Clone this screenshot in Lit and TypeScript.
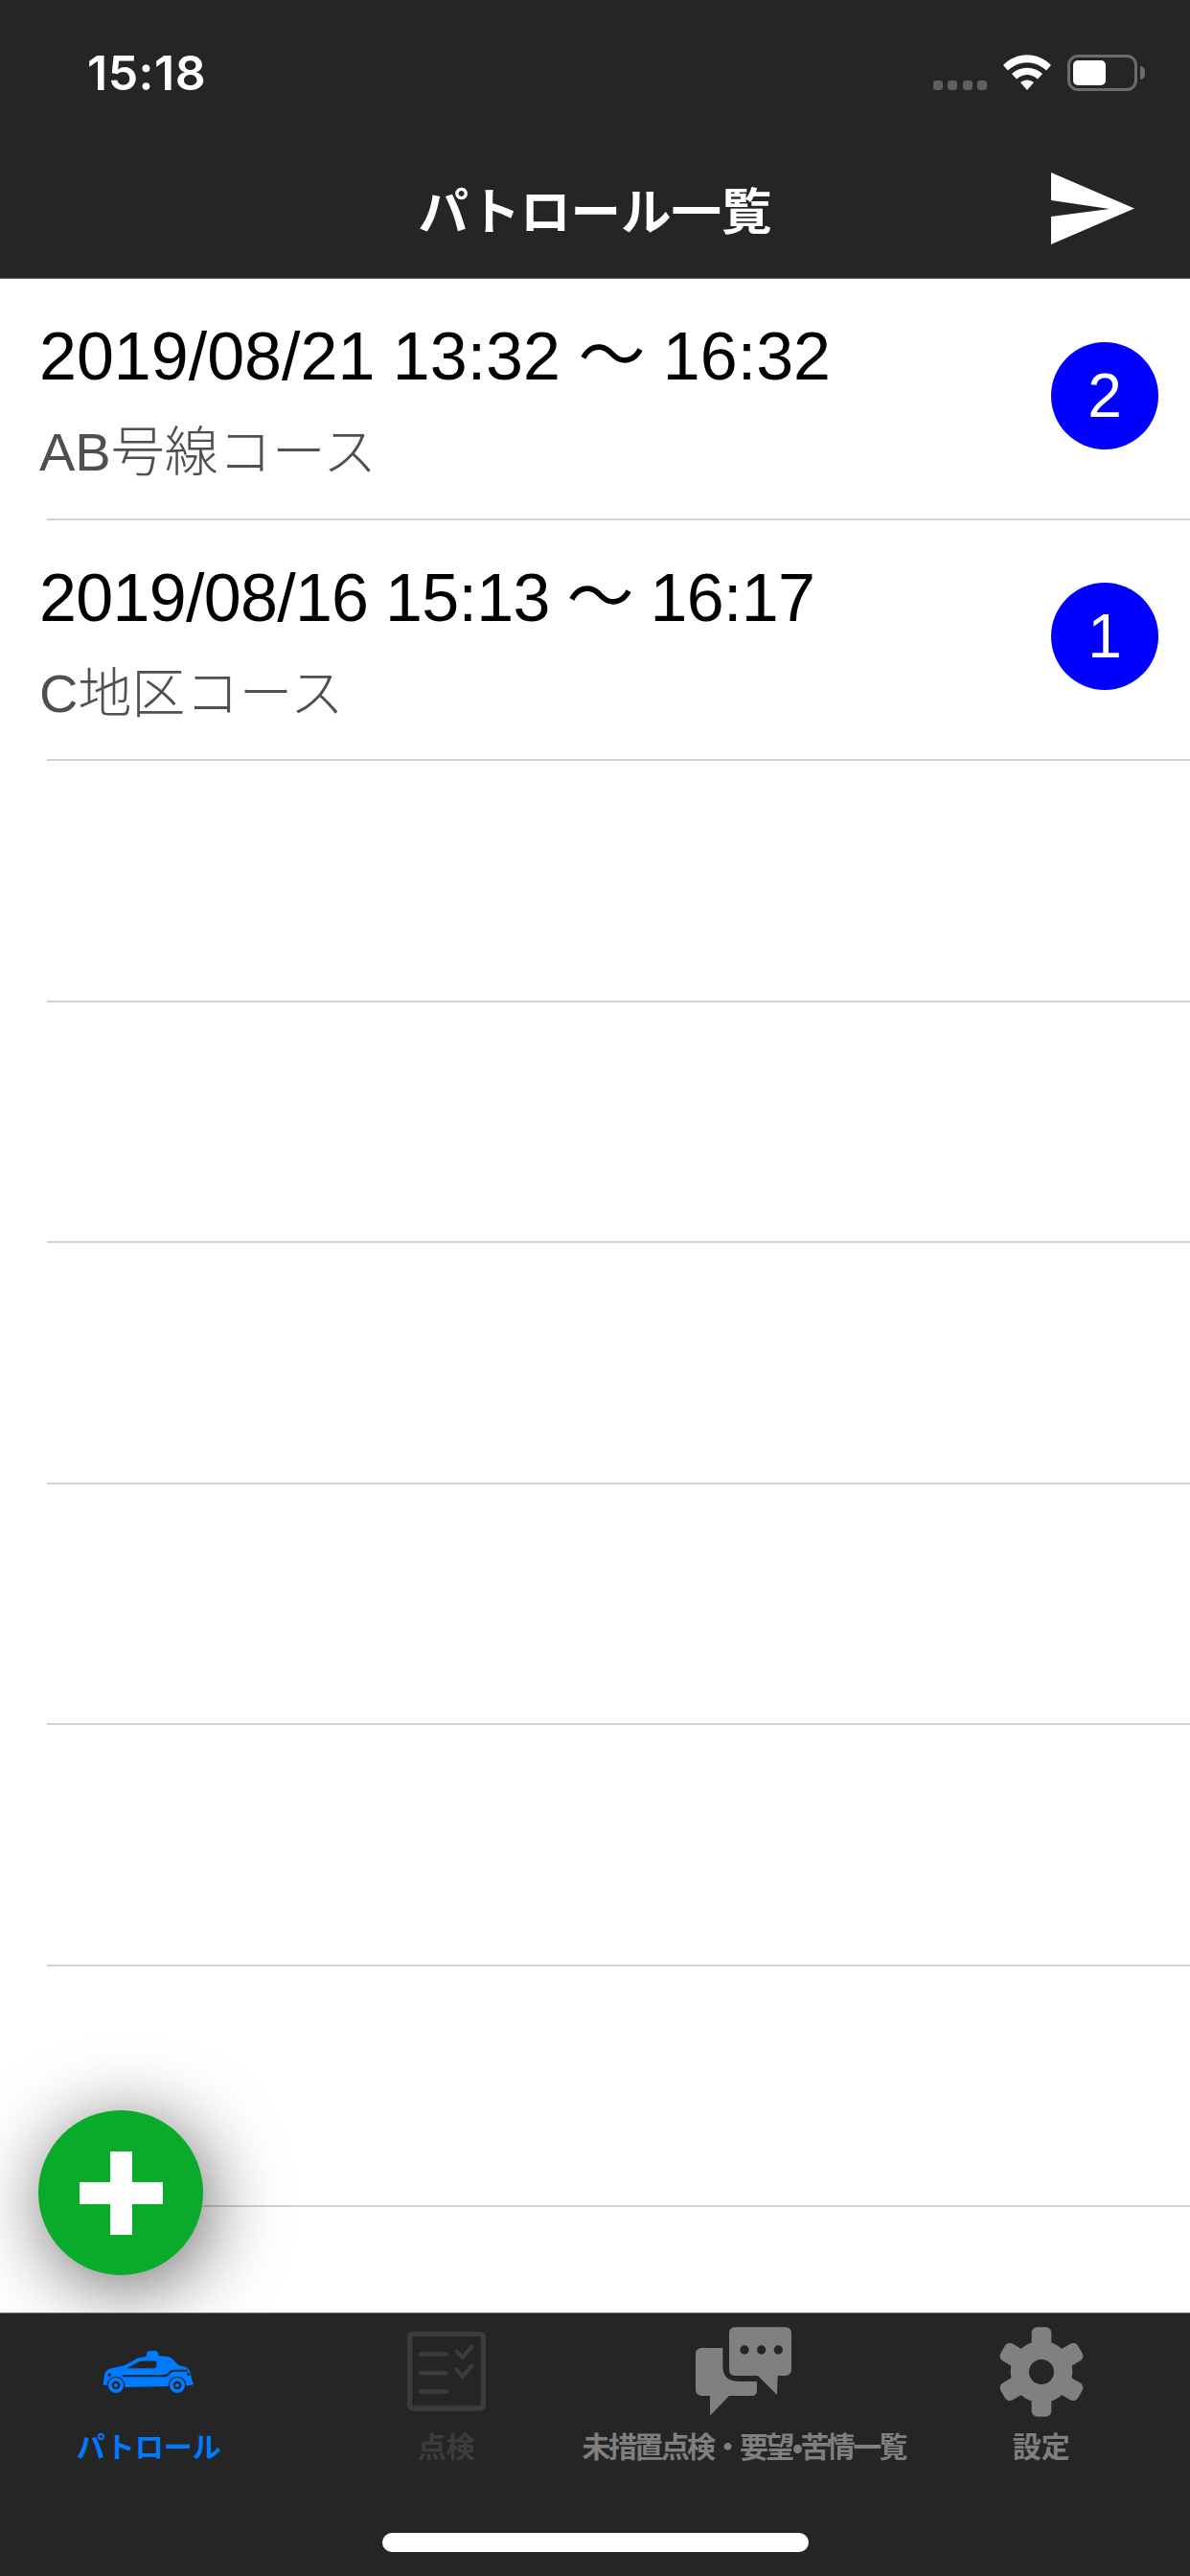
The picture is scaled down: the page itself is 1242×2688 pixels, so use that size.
import { LitElement, css, html, svg } from 'lit';
import { customElement } from 'lit/decorators.js';

interface Patrol {
  period: string;
  course: string;
  count: number;
  narrow?: boolean;
}

const patrols: Patrol[] = [
  { period: '2019/08/21 13:32 ～ 16:32', course: 'AB号線コース', count: 2 },
  // the 1s in this one run narrower in the original font
  { period: '2019/08/16 15:13 ～ 16:17', course: 'C地区コース', count: 1, narrow: true }
];

const ROW_COUNT = 8;

const carIcon = svg`<svg class="icon" width="120" height="70" viewBox="0 0 360 210">
  <path fill="#007aff" d="M38 148 L42 116 Q46 100 65 96 L105 88 L140 68 Q150 62 172 60 L175 48 Q177 42 188 42 L200 42 Q208 42 210 48 L212 58 L240 60 Q250 62 262 75 L275 88 L295 92 Q310 98 312 115 L316 135 Q323 142 320 148 Q306 152 290 152 L100 156 L56 152 Z"/>
  <path fill="#252525" d="M112 97 L148 77 Q156 73 205 74 L205 88 Q204 97 195 97 Z"/>
  <path fill="none" stroke="#252525" stroke-width="6" d="M98 121 L225 121 Q238 121 245 112 Q250 104 262 104 L302 104"/>
  <circle cx="58" cy="117" r="5" fill="#252525"/>
  <circle cx="305" cy="115" r="5" fill="#252525"/>
  <circle cx="78" cy="150" r="28" fill="#252525"/>
  <circle cx="270" cy="150" r="28" fill="#252525"/>
  <circle cx="78" cy="150" r="24" fill="#007aff"/>
  <circle cx="270" cy="150" r="24" fill="#007aff"/>
  <circle cx="78" cy="150" r="13" fill="#252525"/>
  <circle cx="270" cy="150" r="13" fill="#252525"/>
  <circle cx="78" cy="150" r="6" fill="#007aff"/>
  <circle cx="270" cy="150" r="6" fill="#007aff"/>
</svg>`;

const checklistIcon = svg`<svg class="icon" width="102" height="102" viewBox="0 0 306 306">
  <rect x="38" y="38" width="230" height="232" rx="8" fill="none" stroke="#3c3c3c" stroke-width="16"/>
  <g fill="none" stroke="#3c3c3c" stroke-width="13" stroke-linecap="round" stroke-linejoin="round">
    <path d="M72 100 H152 M72 160 H152 M72 218 H152"/>
    <path d="M185 92 L203 110 L232 78 M185 150 L203 170 L232 138"/>
  </g>
</svg>`;

const chatIcon = svg`<svg class="icon" width="120" height="110" viewBox="0 0 360 330">
  <g fill="#808080">
    <path d="M155 28 H310 Q330 28 330 48 V160 Q330 180 310 180 H287 L285 240 L225 180 H155 Q135 180 135 160 V48 Q135 28 155 28 Z"/>
    <path d="M50 93 H115 V150 Q115 198 165 198 H222 V225 Q222 243 205 243 H135 L75 305 V243 H50 Q30 243 30 223 V113 Q30 93 50 93 Z"/>
  </g>
  <g fill="#252525">
    <circle cx="183" cy="99" r="14"/>
    <circle cx="236" cy="99" r="14"/>
    <circle cx="289" cy="99" r="14"/>
  </g>
</svg>`;

const gearIcon = svg`<svg class="icon" width="110" height="110" viewBox="0 0 330 330">
  <g fill="#808080">
    <circle cx="165" cy="168" r="97"/>
    ${[0, 60, 120, 180, 240, 300].map(
      (deg) => svg`<rect x="134" y="28" width="62" height="100" rx="18" transform="rotate(${deg} 165 168)"/>`
    )}
  </g>
  <circle cx="165" cy="168" r="39" fill="#252525"/>
</svg>`;

const sendIcon = svg`<svg width="87" height="75" viewBox="0 0 87 75">
  <path fill="#fff" d="M0 0 L87 37.5 L0 75 L0 46 L61 38 L0 29 Z"/>
</svg>`;

const wifiIcon = svg`<svg width="50" height="37" viewBox="0 0 50 37">
  <path fill="#fff" d="M0 11 C14 -3.5 36 -3.5 50 11 L45 16.5 C33 5.5 17 5.5 5 16.5 Z"/>
  <path fill="#fff" d="M9 20 C18 11.5 32 11.5 41 20 L36 25.5 C29 19.5 21 19.5 14 25.5 Z"/>
  <path fill="#fff" d="M18 29 C22 25.5 28 25.5 32 29 L25 37 Z"/>
</svg>`;

@customElement('app-root')
export class AppRoot extends LitElement {
  static styles = css`
    :host {
      display: block;
      font-family: 'Liberation Sans', 'Noto Sans CJK JP', sans-serif;
    }

    .app {
      position: relative;
      display: flex;
      flex-direction: column;
      height: 2688px;
      overflow: hidden;
      background: #fff;
    }

    .header {
      height: 290px;
      flex: none;
      background: #252525;
      border-bottom: 1px solid #666;
      color: #fff;
    }

    .status {
      display: flex;
      align-items: flex-start;
      height: 180px;
      padding: 57px 47px 0 91px;
      box-sizing: border-box;
    }

    .time {
      flex: 1;
      font-family: 'Inter', 'Liberation Sans', sans-serif;
      font-size: 50px;
      font-weight: 600;
      line-height: 38px;
      letter-spacing: 0.5px;
    }

    .dots {
      display: flex;
      gap: 5.5px;
      margin: 27px 17px 0 0;
    }

    .dots span {
      width: 10px;
      height: 10px;
      border-radius: 3px;
      background: #5f5f5f;
    }

    .battery {
      display: flex;
      align-items: center;
      margin-left: 17px;
    }

    .battery-body {
      width: 73px;
      height: 38px;
      box-sizing: border-box;
      border: 3px solid #6c6c6c;
      border-radius: 11px;
      padding: 3px;
    }

    .battery-fill {
      width: 34px;
      height: 100%;
      border-radius: 5px;
      background: #fff;
    }

    .battery-cap {
      width: 5px;
      height: 14px;
      margin-left: 3px;
      border-radius: 0 6px 6px 0;
      background: #6c6c6c;
    }

    .nav {
      display: grid;
      grid-template-columns: minmax(0, 1fr) auto minmax(0, 1fr);
      align-items: center;
      height: 75px;
    }

    .title {
      grid-column: 2;
      font-family: 'Noto Sans CJK JP', sans-serif;
      font-size: 52.5px;
      font-weight: 700;
      line-height: 75px;
    }

    .send {
      justify-self: end;
      display: flex;
      margin-right: 58px;
    }

    .list {
      flex: 1;
      min-height: 0;
    }

    .row {
      display: flex;
      align-items: center;
      height: 249.5px;
      box-sizing: border-box;
      padding: 0 33px 0 41px;
    }

    .sep {
      height: 2px;
      margin-left: 49px;
      background: #d2d2d2;
    }

    .text {
      flex: 1;
      min-width: 0;
      padding-top: 7px;
    }

    .period {
      font-size: 70px;
      line-height: 76px;
      word-spacing: -1px;
      color: #000;
    }

    .period.narrow {
      letter-spacing: -0.7px;
    }

    .course {
      margin-top: 30px;
      font-family: 'Liberation Sans', 'Noto Sans CJK JP', sans-serif;
      font-size: 56px;
      font-weight: 300;
      line-height: 64px;
      color: #4f4f4f;
    }

    .badge {
      flex: none;
      display: flex;
      align-items: center;
      justify-content: center;
      width: 112px;
      height: 112px;
      margin-bottom: 6px;
      border-radius: 50%;
      background: #0000ff;
      color: #fff;
      font-size: 64px;
    }

    .fab {
      position: absolute;
      left: 40px;
      top: 2202px;
      display: flex;
      align-items: center;
      justify-content: center;
      width: 172px;
      height: 172px;
      border-radius: 50%;
      background: #0aaa2a;
      box-shadow: 6px 12px 80px rgba(0, 0, 0, 0.6);
    }

    .plus-h,
    .plus-v {
      position: absolute;
      background: #fff;
    }

    .plus-h {
      width: 87px;
      height: 23px;
    }

    .plus-v {
      width: 23px;
      height: 87px;
    }

    .tabbar {
      position: relative;
      flex: none;
      display: grid;
      grid-template-columns: repeat(4, minmax(0, 1fr));
      height: 275px;
      box-sizing: border-box;
      border-top: 1px solid #777;
      background: #252525;
    }

    .tab {
      display: flex;
      flex-direction: column;
      align-items: center;
      padding-top: 5px;
    }

    .tab-icon {
      display: flex;
      align-items: center;
      justify-content: center;
      height: 110px;
    }

    .label {
      margin-top: 4px;
      font-family: 'Noto Sans CJK JP', sans-serif;
      font-size: 30px;
      font-weight: 700;
      line-height: 36px;
      white-space: nowrap;
      color: #7f7f7f;
    }

    .label.active {
      color: #007aff;
    }

    .label.off {
      color: #3c3c3c;
    }

    .label.tight {
      letter-spacing: -2.6px;
    }

    .home {
      position: absolute;
      left: 399px;
      bottom: 25px;
      width: 445px;
      height: 20px;
      border-radius: 10px;
      background: #fff;
    }
  `;

  override render() {
    const empty = Array.from({ length: ROW_COUNT - patrols.length });
    return html`
      <div class="app">
        <header class="header">
          <div class="status">
            <div class="time">15:18</div>
            <div class="dots"><span></span><span></span><span></span><span></span></div>
            ${wifiIcon}
            <div class="battery">
              <div class="battery-body"><div class="battery-fill"></div></div>
              <div class="battery-cap"></div>
            </div>
          </div>
          <div class="nav">
            <div class="title">パトロール一覧</div>
            <div class="send">${sendIcon}</div>
          </div>
        </header>

        <main class="list">
          ${patrols.map(
            (p) => html`
              <div class="row">
                <div class="text">
                  <div class="period ${p.narrow ? 'narrow' : ''}">${p.period}</div>
                  <div class="course">${p.course}</div>
                </div>
                <div class="badge">${p.count}</div>
              </div>
              <div class="sep"></div>
            `
          )}
          ${empty.map(() => html`<div class="row"></div><div class="sep"></div>`)}
        </main>

        <div class="fab"><div class="plus-h"></div><div class="plus-v"></div></div>

        <nav class="tabbar">
          <div class="tab">
            <div class="tab-icon">${carIcon}</div>
            <div class="label active">パトロール</div>
          </div>
          <div class="tab">
            <div class="tab-icon">${checklistIcon}</div>
            <div class="label off">点検</div>
          </div>
          <div class="tab">
            <div class="tab-icon">${chatIcon}</div>
            <div class="label tight">未措置点検・要望•苦情一覧</div>
          </div>
          <div class="tab">
            <div class="tab-icon">${gearIcon}</div>
            <div class="label">設定</div>
          </div>
          <div class="home"></div>
        </nav>
      </div>
    `;
  }
}
